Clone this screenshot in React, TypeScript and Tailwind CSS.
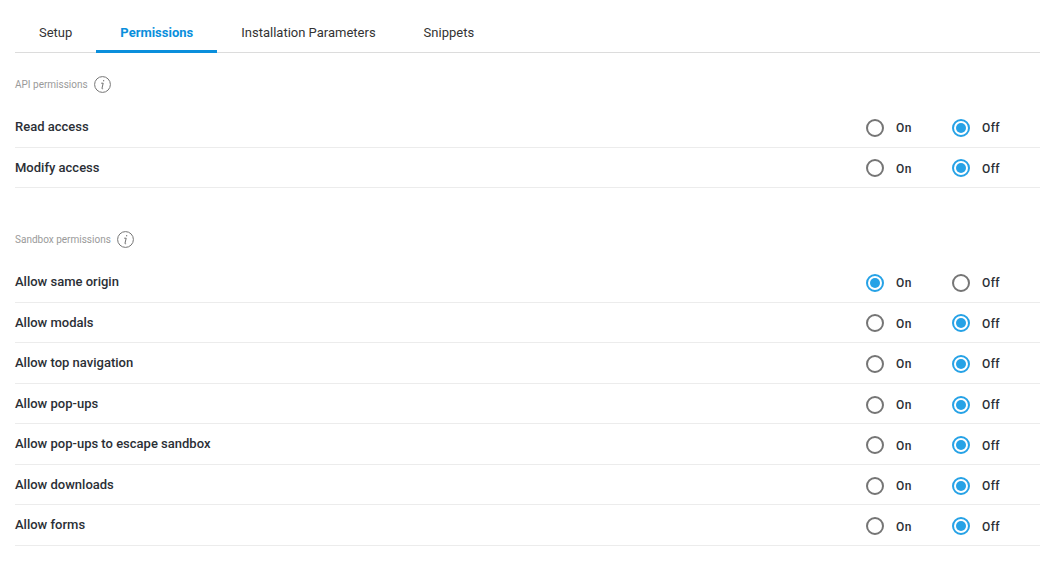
import React from 'react';

const tabs = ['Setup', 'Permissions', 'Installation Parameters', 'Snippets'];

const apiPermissions = [
  { label: 'Read access', on: false },
  { label: 'Modify access', on: false },
];

const sandboxPermissions = [
  { label: 'Allow same origin', on: true },
  { label: 'Allow modals', on: false },
  { label: 'Allow top navigation', on: false },
  { label: 'Allow pop-ups', on: false },
  { label: 'Allow pop-ups to escape sandbox', on: false },
  { label: 'Allow downloads', on: false },
  { label: 'Allow forms', on: false },
];

const InfoIcon = () => (
  <svg width="17" height="17" viewBox="0 0 17 17" fill="none" className="ml-[6px]">
    <circle cx="8.5" cy="8.5" r="7.9" stroke="#757575" strokeWidth="1" />
    <path d="M9.6 4.2v1.1" stroke="#616161" strokeWidth="1.2" />
    <path d="M7.2 7.2h2l-1.2 5c-.1.5.2.7 1.1.5" stroke="#616161" strokeWidth="0.9" />
  </svg>
);

const Radio = ({ label, checked }: { label: string; checked: boolean }) => (
  <div className="flex items-center w-[86px] mt-[2px]">
    {checked ? (
      <span className="flex items-center justify-center w-[18px] h-[18px] rounded-full border-2 border-[#26a2e6]">
        <span className="w-[10px] h-[10px] rounded-full bg-[#26a2e6]" />
      </span>
    ) : (
      <span className="w-[18px] h-[18px] rounded-full border-2 border-[#757575]" />
    )}
    <span className="ml-[12px] mt-[1px] text-[12px] font-medium tracking-[0.4px] text-[#2b2f36]">{label}</span>
  </div>
);

const Row = ({ label, on }: { label: string; on: boolean }) => (
  <div className="flex items-center justify-between h-[40.55px] border-b border-[#ececec]">
    <span className="text-[13px] font-medium text-[#2b2f36]">{label}</span>
    <div className="flex w-[174px]">
      <Radio label="On" checked={on} />
      <Radio label="Off" checked={!on} />
    </div>
  </div>
);

const SectionTitle = ({ title }: { title: string }) => (
  <div className="flex items-center h-[18px]">
    <span className="text-[10px] text-[#9a9a9a]">{title}</span>
    <InfoIcon />
  </div>
);

export default function App() {
  return (
    <div className="w-[1058px] h-[567px] bg-white pl-[15px] pr-[18px] overflow-hidden font-['Roboto',sans-serif]">
      {/* Tabs */}
      <div className="flex h-[53px] pt-[12px] border-b border-[#dcdcdc]">
        {tabs.map((tab) => (
          <div
            key={tab}
            className={
              tab === 'Permissions'
                ? 'px-[24px] h-[41px] pt-[12px] leading-[18px] text-[13px] font-bold text-[#0a8fdc] border-b-[3px] border-[#0a8fdc]'
                : 'px-[24px] h-[41px] pt-[12px] leading-[18px] text-[13px] text-[#333]'
            }
          >
            {tab}
          </div>
        ))}
      </div>

      {/* API permissions */}
      <div className="pt-[22px]">
        <SectionTitle title="API permissions" />
      </div>
      <div className="mt-[14px]">
        {apiPermissions.map((p) => (
          <Row key={p.label} label={p.label} on={p.on} />
        ))}
      </div>

      {/* Sandbox permissions */}
      <div className="pt-[42px]">
        <SectionTitle title="Sandbox permissions" />
      </div>
      <div className="mt-[14px]">
        {sandboxPermissions.map((p) => (
          <Row key={p.label} label={p.label} on={p.on} />
        ))}
      </div>
    </div>
  );
}
